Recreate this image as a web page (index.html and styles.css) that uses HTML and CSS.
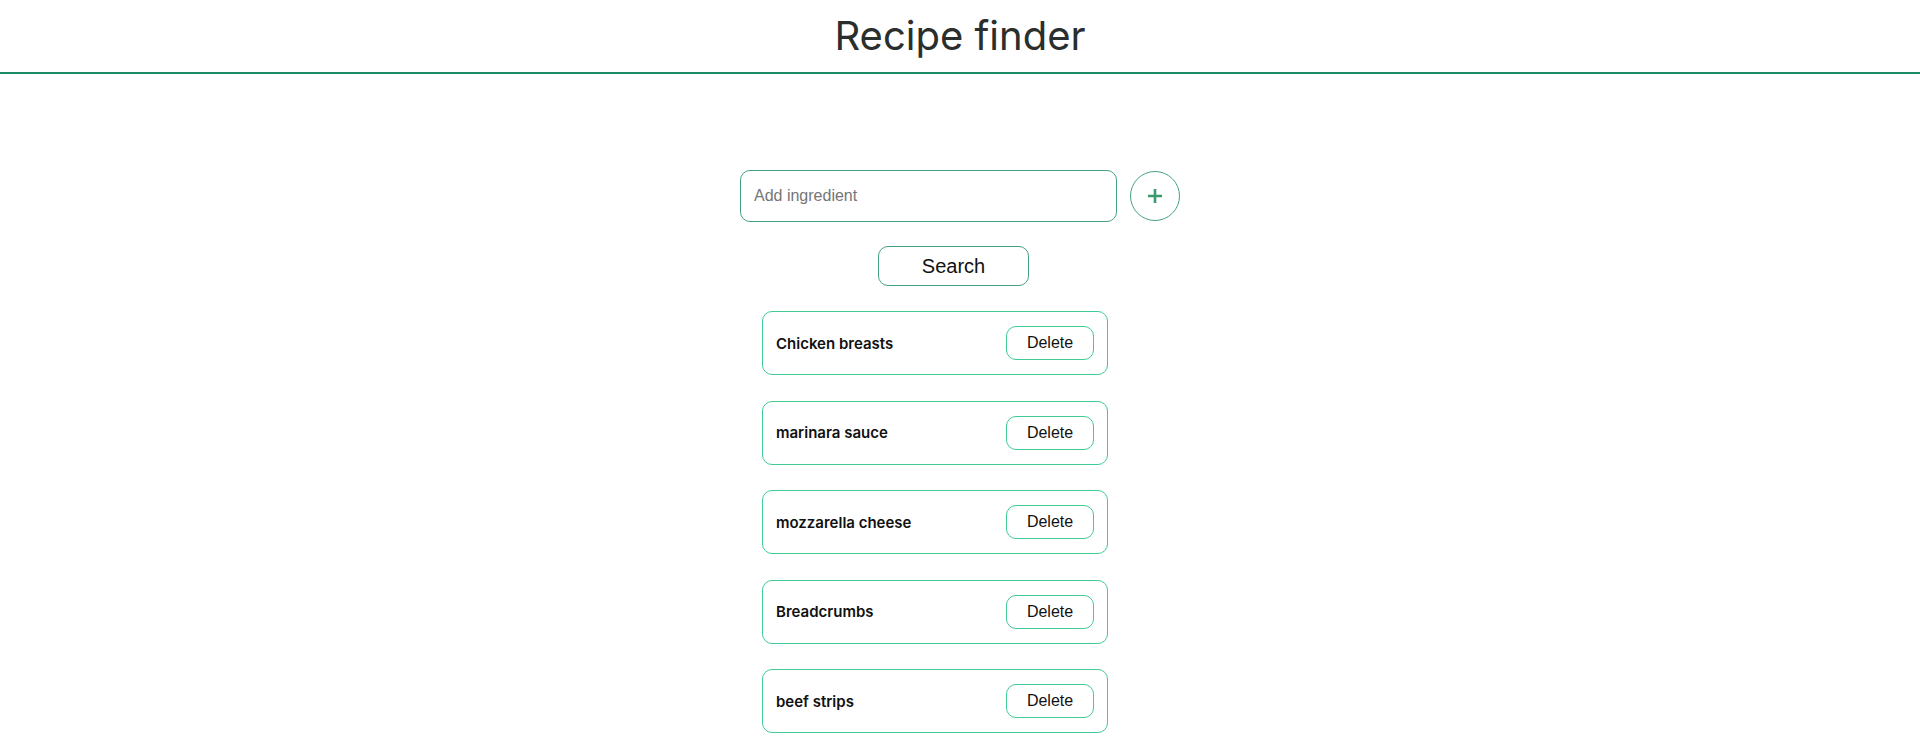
FILE: index.html
```html
<!DOCTYPE html>
<html lang="en">
<head>
<meta charset="utf-8">
<title>Recipe finder</title>
<link rel="stylesheet" href="styles.css">
</head>
<body>
<header class="header">
  <h1 class="title">Recipe finder</h1>
</header>
<main class="main">
  <div class="add-row">
    <input class="ingredient-input" type="text" placeholder="Add ingredient">
    <button class="add-btn" type="button" aria-label="Add">
      <svg width="16" height="16" viewBox="0 0 16 16"><path d="M8 1v14M1 8h14" stroke="#3a9a6e" stroke-width="2.6" fill="none"/></svg>
    </button>
  </div>
  <button class="search-btn" type="button">Search</button>
  <ul class="list">
    <li class="card"><span class="card-name">Chicken breasts</span><button class="delete-btn" type="button">Delete</button></li>
    <li class="card"><span class="card-name">marinara sauce</span><button class="delete-btn" type="button">Delete</button></li>
    <li class="card"><span class="card-name">mozzarella cheese</span><button class="delete-btn" type="button">Delete</button></li>
    <li class="card"><span class="card-name">Breadcrumbs</span><button class="delete-btn" type="button">Delete</button></li>
    <li class="card"><span class="card-name">beef strips</span><button class="delete-btn" type="button">Delete</button></li>
  </ul>
</main>
</body>
</html>
```

FILE: styles.css
```css
* { box-sizing: border-box; }
html, body { margin: 0; padding: 0; background: #fff; }
body { font-family: Inter, "Noto Sans", sans-serif; color: #111; }

.header {
  padding: 12px 0 12px;
  border-bottom: 2px solid #1c8a62;
  text-align: center;
}
.title {
  margin: 0;
  font-size: 40px;
  line-height: 48px;
  font-weight: 400;
  color: #2a2e2c;
}

.main {
  display: flex;
  flex-direction: column;
  align-items: center;
  padding-top: 96px;
}

.add-row {
  display: flex;
  align-items: center;
  gap: 13px;
}
.ingredient-input {
  width: 377px;
  height: 52px;
  border: 1px solid #45a27f;
  border-radius: 10px;
  padding: 0 13px;
  font-family: "Liberation Sans", Arial, sans-serif;
  font-size: 16px;
  color: #111;
  outline: none;
}
.ingredient-input::placeholder { color: #757575; }

.add-btn {
  width: 50px;
  height: 50px;
  border-radius: 50%;
  border: 1px solid #45a27f;
  background: #fff;
  display: flex;
  align-items: center;
  justify-content: center;
  padding: 0;
}

.search-btn {
  margin-top: 24px;
  margin-right: 13px;
  width: 151px;
  height: 40px;
  border: 1px solid #45a27f;
  border-radius: 10px;
  background: #fff;
  font-family: "Liberation Sans", Arial, sans-serif;
  font-size: 20px;
  color: #111;
  padding: 0;
}

.list {
  list-style: none;
  margin: 25px 50px 0 0;
  padding: 0;
  display: flex;
  flex-direction: column;
  gap: 25.5px;
}
.card {
  width: 346px;
  height: 64px;
  border: 1px solid #3dcc94;
  border-radius: 10px;
  padding: 0 13px;
  display: flex;
  align-items: center;
  justify-content: space-between;
}
.card-name {
  font-size: 15px;
  font-weight: 600;
  color: #111;
}
.delete-btn {
  width: 88px;
  height: 34px;
  border: 1px solid #3dcc94;
  border-radius: 10px;
  background: #fff;
  font-family: "Liberation Sans", Arial, sans-serif;
  font-size: 16px;
  color: #111;
  padding: 0;
}
```
